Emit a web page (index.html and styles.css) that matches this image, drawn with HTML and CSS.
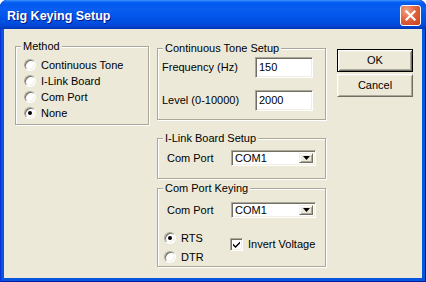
FILE: index.html
```html
<!DOCTYPE html>
<html>
<head>
<meta charset="utf-8">
<title>Rig Keying Setup</title>
<link rel="stylesheet" href="styles.css">
</head>
<body>
<div class="window">
  <div class="titlebar">
    <span class="title">Rig Keying Setup</span>
    <span class="close"><svg width="19" height="19" viewBox="0 0 19 19"><path d="M5.5 5.5 L13.5 13.5 M13.5 5.5 L5.5 13.5" stroke="#fff" stroke-width="2.2" stroke-linecap="square"/></svg></span>
  </div>
  <div class="client">
    <fieldset class="group method">
      <legend>Method</legend>
      <div class="opt"><span class="radio"></span>Continuous Tone</div>
      <div class="opt"><span class="radio"></span>I-Link Board</div>
      <div class="opt"><span class="radio"></span>Com Port</div>
      <div class="opt"><span class="radio on"></span>None</div>
    </fieldset>
    <div class="middle">
      <fieldset class="group tone">
        <legend>Continuous Tone Setup</legend>
        <div class="field"><span class="lbl">Frequency (Hz)</span><span class="edit">150</span></div>
        <div class="field"><span class="lbl">Level (0-10000)</span><span class="edit">2000</span></div>
      </fieldset>
      <fieldset class="group ilink">
        <legend>I-Link Board Setup</legend>
        <div class="field"><span class="lbl port">Com Port</span><span class="combo"><span class="val">COM1</span><span class="drop"><svg width="7" height="4" viewBox="0 0 7 4"><path d="M0 0 H7 L3.5 4 Z" fill="#000"/></svg></span></span></div>
      </fieldset>
      <fieldset class="group keying">
        <legend>Com Port Keying</legend>
        <div class="field"><span class="lbl port">Com Port</span><span class="combo"><span class="val">COM1</span><span class="drop"><svg width="7" height="4" viewBox="0 0 7 4"><path d="M0 0 H7 L3.5 4 Z" fill="#000"/></svg></span></span></div>
        <div class="lines">
          <div class="radios">
            <div class="opt"><span class="radio on"></span>RTS</div>
            <div class="opt"><span class="radio"></span>DTR</div>
          </div>
          <div class="check"><span class="box"><svg width="9" height="9" viewBox="0 0 9 9"><path d="M1 3.5 L3.5 6 L8 1.5 V3.5 L3.5 8 L1 5.5 Z" fill="#000"/></svg></span>Invert Voltage</div>
        </div>
      </fieldset>
    </div>
    <div class="buttons">
      <div class="btn default"><span class="face">OK</span></div>
      <div class="btn"><span class="face">Cancel</span></div>
    </div>
  </div>
</div>
</body>
</html>
```
FILE: styles.css
```css
* { box-sizing: border-box; }
html, body { margin: 0; padding: 0; background: #fff; }
body { width: 426px; height: 282px; overflow: hidden; }

.window {
  width: 426px;
  height: 282px;
  display: flex;
  flex-direction: column;
  background: #0855dd;
  border-radius: 7px 7px 0 0;
  box-shadow: inset 1px 0 0 #0831d9, inset -1px 0 0 #001ea0, inset 0 -1px 0 #001ea0;
  overflow: hidden;
  font: 11px/13px "Liberation Sans", Arial, sans-serif;
  color: #000;
}

.titlebar {
  height: 29px;
  flex: none;
  display: flex;
  align-items: flex-start;
  justify-content: space-between;
  padding: 0 5px 0 7px;
  background: linear-gradient(to bottom, #3d95ff 0, #0a63f0 2px, #0058ee 4px, #0a5ef0 9px, #0055eb 16px, #0050e2 22px, #0046d3 26px, #0035b8 29px);
  border-radius: 7px 7px 0 0;
}
.title {
  padding-top: 9px;
  font: bold 12.5px/14px "Liberation Sans", Arial, sans-serif;
  color: #fff;
  text-shadow: 1px 1px 0 #0a1883;
}
.close {
  margin-top: 5px;
  width: 21px;
  height: 21px;
  border: 1px solid #fff;
  border-radius: 3px;
  background: radial-gradient(circle at 30% 25%, #f0a488 0, #e2633f 45%, #c5401b 100%);
  display: flex;
  align-items: center;
  justify-content: center;
}

.client {
  flex: 1;
  margin: 0 4px 4px;
  background: #ece9d8;
  display: flex;
  align-items: flex-start;
  padding-left: 11px;
}

.group {
  margin: 0;
  min-width: 0;
  border: 1px solid #aca899;
  box-shadow: inset 1px 1px 0 #fff, 1px 1px 0 #fff;
}
.group legend {
  padding: 0 2px;
  line-height: 13px;
  background: #ece9d8;
}

.method {
  width: 134px;
  margin-top: 11px;
  padding: 4px 8px 3px 8px;
}
.method legend { margin-left: -3px; }

.opt {
  display: flex;
  align-items: center;
  height: 16px;
}
.radio {
  width: 12px;
  height: 12px;
  margin-right: 5px;
  flex: none;
  border-radius: 50%;
  background: #fff;
  border: 1px solid;
  border-color: #aca899 #fff #fff #aca899;
  box-shadow: inset 1px 1px 0 #716f64, inset -1px -1px 0 #f1efe2;
  display: flex;
  align-items: center;
  justify-content: center;
}
.radio.on::after {
  content: "";
  width: 4px;
  height: 4px;
  border-radius: 50%;
  background: #000;
}

.middle {
  width: 169px;
  margin-left: 8px;
  display: flex;
  flex-direction: column;
}
.tone {
  margin-top: 13px;
  padding: 2px 4px 8px 4px;
}
.tone legend, .ilink legend, .keying legend { margin-left: 1px; }

.field {
  display: flex;
  align-items: center;
}
.tone .field + .field { margin-top: 12px; }
.lbl { width: 93px; flex: none; }
.lbl.port { width: 69px; padding-left: 5px; }

.edit {
  width: 58px;
  height: 21px;
  padding: 0 3px;
  display: flex;
  align-items: center;
  background: #fff;
  border: 1px solid;
  border-color: #aca899 #fff #fff #aca899;
  box-shadow: inset 1px 1px 0 #716f64, inset -1px -1px 0 #f1efe2;
}

.ilink {
  margin-top: 12px;
  padding: 5px 4px 12px 4px;
}
.combo {
  width: 85px;
  height: 16px;
  padding: 2px;
  display: flex;
  align-items: stretch;
  background: #fff;
  border: 1px solid;
  border-color: #aca899 #fff #fff #aca899;
  box-shadow: inset 1px 1px 0 #716f64, inset -1px -1px 0 #f1efe2;
}
.combo .val {
  flex: 1;
  display: flex;
  align-items: center;
  padding-left: 1px;
}
.drop {
  width: 14px;
  margin: 0;
  background: #ece9d8;
  border: 1px solid;
  border-color: #f1efe2 #716f64 #716f64 #f1efe2;
  box-shadow: inset 1px 1px 0 #fff, inset -1px -1px 0 #aca899;
  display: flex;
  align-items: center;
  justify-content: center;
}

.keying {
  margin-top: 3px;
  padding: 7px 4px 1px 4px;
}
.lines {
  display: flex;
  align-items: flex-start;
  margin-top: 12px;
}
.radios { width: 68px; padding-left: 2px; }
.radios .opt { height: 16px; }
.radios .opt + .opt { margin-top: 3px; }
.check {
  display: flex;
  align-items: center;
  margin-top: 8px;
  height: 13px;
}
.box {
  width: 13px;
  height: 13px;
  margin-right: 5px;
  flex: none;
  background: #fff;
  border: 1px solid;
  border-color: #aca899 #fff #fff #aca899;
  box-shadow: inset 1px 1px 0 #716f64, inset -1px -1px 0 #f1efe2;
  display: flex;
  align-items: center;
  justify-content: center;
}

.buttons {
  width: 76px;
  margin-left: 11px;
  margin-top: 20px;
  display: flex;
  flex-direction: column;
  gap: 2px;
}
.btn {
  height: 23px;
  background: #ece9d8;
  border: 1px solid;
  border-color: #fff #716f64 #716f64 #fff;
  box-shadow: inset 1px 1px 0 #f1efe2, inset -1px -1px 0 #aca899;
  display: flex;
  align-items: center;
  justify-content: center;
}
.btn.default {
  border: 1px solid #000;
  box-shadow: inset 1px 1px 0 #fff, inset -1px -1px 0 #716f64, inset 2px 2px 0 #f1efe2, inset -2px -2px 0 #aca899;
}
```
